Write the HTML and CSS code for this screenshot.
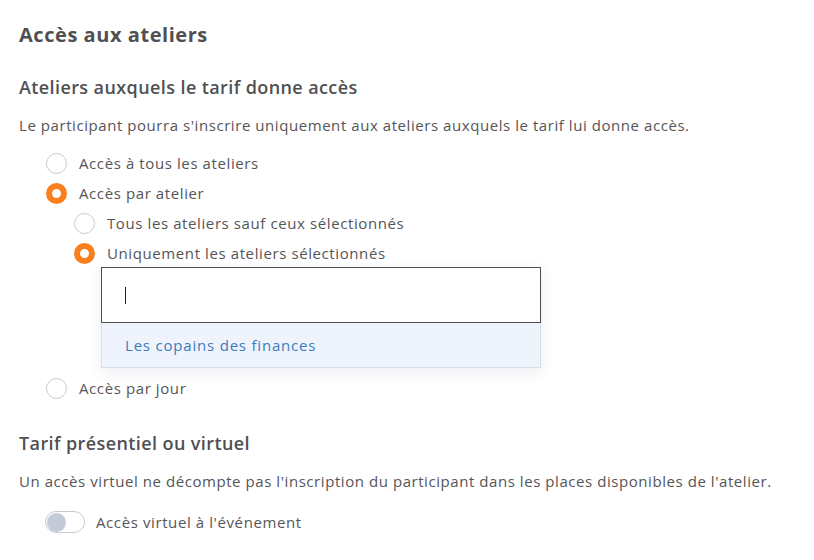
FILE: index.html
```html
<!DOCTYPE html>
<html lang="fr">
<head>
<meta charset="utf-8">
<link rel="stylesheet" href="styles.css">
</head>
<body>
<main class="page">
  <h1 class="title">Accès aux ateliers</h1>
  <h2 class="subtitle">Ateliers auxquels le tarif donne accès</h2>
  <p class="desc">Le participant pourra s'inscrire uniquement aux ateliers auxquels le tarif lui donne accès.</p>
  <div class="options">
    <div class="radio-row"><span class="radio"></span><span>Accès à tous les ateliers</span></div>
    <div class="radio-row"><span class="radio checked"></span><span>Accès par atelier</span></div>
    <div class="sub-options">
      <div class="radio-row"><span class="radio"></span><span>Tous les ateliers sauf ceux sélectionnés</span></div>
      <div class="radio-row"><span class="radio checked"></span><span>Uniquement les ateliers sélectionnés</span></div>
      <div class="select">
        <div class="select-input"><span class="caret"></span></div>
        <div class="select-menu"><div class="select-option">Les copains des finances</div></div>
      </div>
    </div>
    <div class="radio-row"><span class="radio"></span><span>Accès par jour</span></div>
  </div>
  <h2 class="subtitle second">Tarif présentiel ou virtuel</h2>
  <p class="desc">Un accès virtuel ne décompte pas l'inscription du participant dans les places disponibles de l'atelier.</p>
  <div class="toggle-row"><span class="toggle"><span class="knob"></span></span><span>Accès virtuel à l'événement</span></div>
</main>
</body>
</html>
```
FILE: styles.css
```css
* { box-sizing: border-box; }
html, body { margin: 0; padding: 0; background: #fff; }
body {
  font-family: "Open Sans", "Lato", sans-serif;
  color: #555558;
  font-size: 15px;
  letter-spacing: 0.6px;
}
.page { padding: 21px 19px 0 19px; }
.title {
  margin: 0;
  font-size: 20px;
  font-weight: 700;
  line-height: 28px;
  letter-spacing: 0.55px;
  color: #505053;
}
.subtitle {
  margin: 26px 0 0 0;
  font-size: 18px;
  font-weight: 600;
  line-height: 24px;
  letter-spacing: 0.4px;
  color: #505053;
}
.subtitle.second { margin-top: 28px; }
.desc {
  margin: 15px 0 0 0;
  line-height: 22px;
  letter-spacing: 0.56px;
}
.options { margin: 12px 0 0 27px; display: flex; flex-direction: column; }
.radio-row {
  display: flex;
  align-items: center;
  gap: 12px;
  height: 30px;
}
.radio {
  width: 21px; height: 21px;
  border-radius: 50%;
  border: 1px solid #c4cad6;
  background: #fff;
  flex: none;
}
.radio.checked {
  border: 6px solid #fb7f1d;
  background: #fff;
}
.sub-options { margin-left: 28px; display: flex; flex-direction: column; }
.select { margin: -1px 0 5px 27px; width: 440px; box-shadow: 0 4px 14px rgba(60,80,120,0.10); }
.select-input {
  height: 56px;
  border: 1px solid #4f4f52;
  background: #fff;
  display: flex; align-items: center;
  padding-left: 23px;
}
.caret { width: 1px; height: 17px; background: #222; }
.select-menu {
  background: #eff4fc;
  border: 1px solid #d6deea;
  border-top: none;
}
.select-option {
  height: 44px;
  display: flex; align-items: center;
  padding-left: 23px;
  color: #3b7bbf;
  letter-spacing: 0.8px;
}
.toggle-row {
  margin: 19px 0 0 26px;
  display: flex; align-items: center; gap: 11px;
}
.toggle {
  width: 40px; height: 22px;
  border-radius: 11px;
  border: 1px solid #c4cad6;
  background: #fff;
  display: flex; align-items: center; padding-left: 1px;
}
.knob { width: 19px; height: 19px; border-radius: 50%; background: #c3cad9; }
```
